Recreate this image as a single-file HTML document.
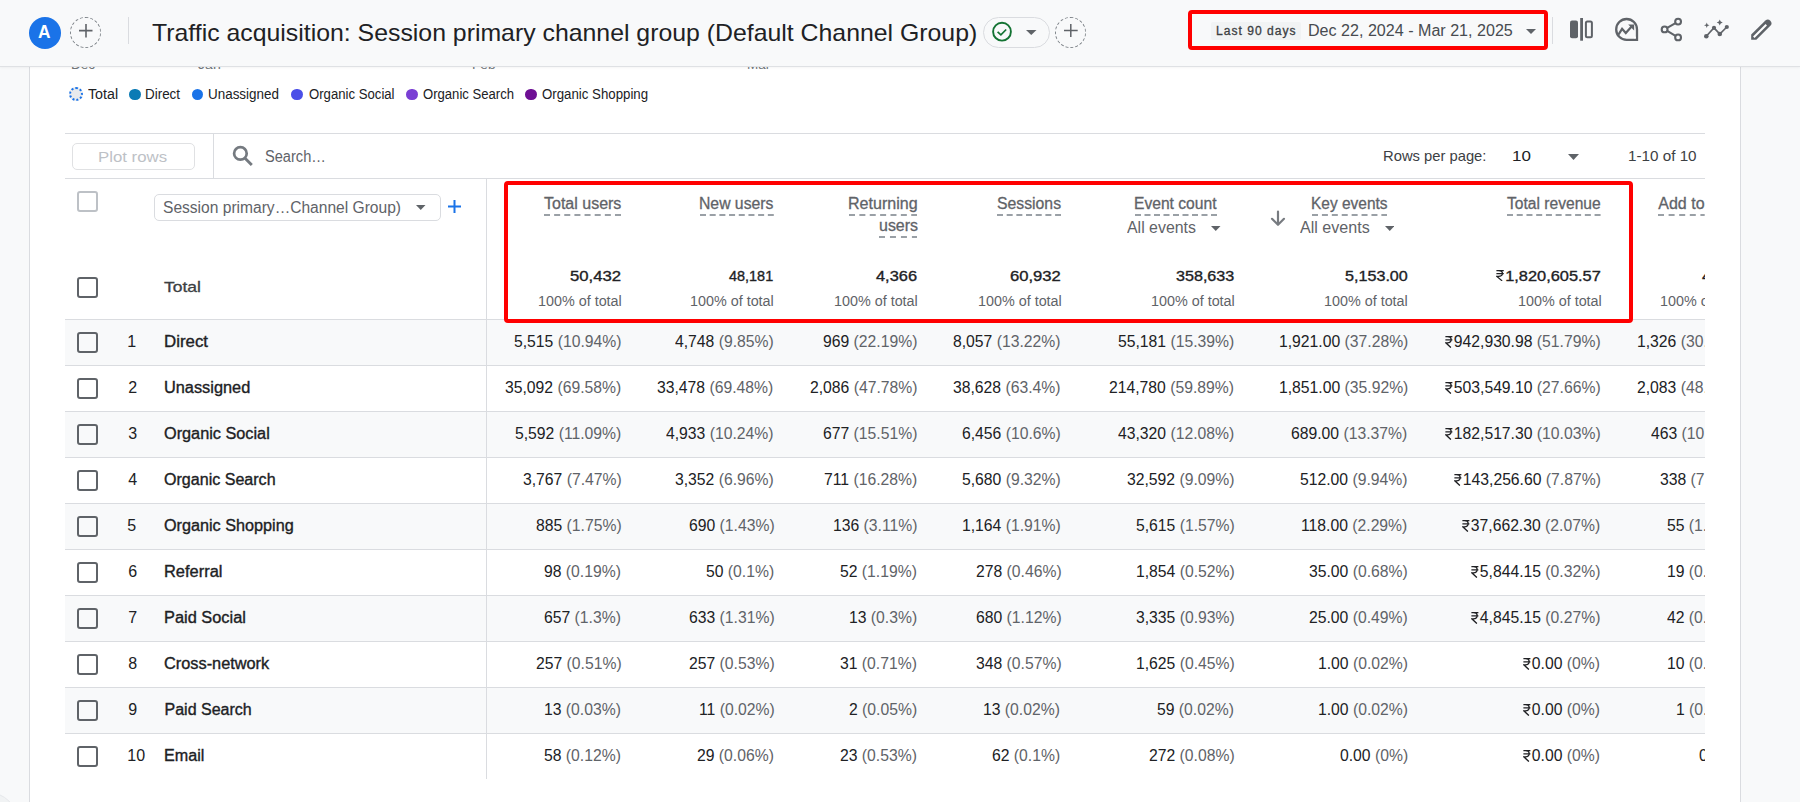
<!DOCTYPE html>
<html><head><meta charset="utf-8"><title>Traffic acquisition</title>
<style>
*{box-sizing:border-box;margin:0;padding:0}
html,body{width:1800px;height:802px;overflow:hidden;background:#f8f9fa;font-family:"Liberation Sans",sans-serif;position:relative}
.t{position:absolute;white-space:nowrap;line-height:1;font-family:"Liberation Sans",sans-serif;transform-origin:0 0}
.rp{display:inline-block;width:0.5em;height:0.75em;vertical-align:-0.04em;margin-right:0.06em}
.med{-webkit-text-stroke:0.35px currentColor}
.mh{-webkit-text-stroke:0.3px currentColor}
.tst{-webkit-text-stroke:0.35px currentColor}
.a{position:absolute;display:block}
.hl{position:absolute;left:65px;width:1640px;height:1px;background:#dadce0}
.vl{position:absolute;width:1px;background:#dadce0}
.cb{position:absolute;left:77px;width:21px;height:21px;border:2px solid #5f6368;border-radius:3px}
.rowbg{position:absolute;left:65px;width:1640px;height:45px;background:#f8f9fa}
.dash{position:absolute;height:2px;background-image:linear-gradient(to right,#9aa0a6 0,#9aa0a6 6px,transparent 6px);background-size:10px 2px;background-repeat:repeat-x}
.hdr{position:absolute;left:0;top:0;width:1800px;height:66px;background:#f8f9fa;box-shadow:0 1px 0 #dfe1e4,0 1px 3px rgba(60,64,67,.10)}
</style></head><body>
<div style="position:absolute;left:29px;top:0;width:1712px;height:802px;background:#fff;border-left:1px solid #dadce0;border-right:1px solid #dadce0"></div>
<div style="position:absolute;left:-41.7px;top:792.3px;width:59.4px;height:59.4px;border-radius:50%;background:#f1f3f4;border:1px solid #e6e8eb"></div>

<div style="position:absolute;left:69px;top:87.3px;width:14px;height:14px;border-radius:50%;border:2px dotted #1a73e8;background:#e8eaed"></div>
<div style="position:absolute;left:129px;top:88.5px;width:11.5px;height:11.5px;border-radius:50%;background:#0b7bb5"></div>
<div style="position:absolute;left:191.8px;top:88.5px;width:11.5px;height:11.5px;border-radius:50%;background:#1a73e8"></div>
<div style="position:absolute;left:291px;top:88.5px;width:11.5px;height:11.5px;border-radius:50%;background:#4b4fe8"></div>
<div style="position:absolute;left:406px;top:88.5px;width:11.5px;height:11.5px;border-radius:50%;background:#7a3fd4"></div>
<div style="position:absolute;left:525px;top:88.5px;width:11.5px;height:11.5px;border-radius:50%;background:#6e0f94"></div>
<div class="rowbg" style="top:320px"></div>
<div class="rowbg" style="top:412px"></div>
<div class="rowbg" style="top:504px"></div>
<div class="rowbg" style="top:596px"></div>
<div class="rowbg" style="top:688px"></div>
<div class="hl" style="top:133px"></div>
<div class="hl" style="top:178px"></div>
<div class="hl" style="top:319px"></div>
<div class="hl" style="top:365px"></div>
<div class="hl" style="top:411px"></div>
<div class="hl" style="top:457px"></div>
<div class="hl" style="top:503px"></div>
<div class="hl" style="top:549px"></div>
<div class="hl" style="top:595px"></div>
<div class="hl" style="top:641px"></div>
<div class="hl" style="top:687px"></div>
<div class="hl" style="top:733px"></div>
<div class="vl" style="left:213px;top:133px;height:45px"></div>
<div class="vl" style="left:486px;top:178px;height:601px"></div>
<div style="position:absolute;left:72px;top:143px;width:122.5px;height:27px;border:1px solid #e0e1e3;border-radius:5px"></div>
<svg class="a" style="left:229px;top:143px" width="26" height="26" viewBox="0 0 26 26"><circle cx="11.4" cy="10.4" r="6.3" fill="none" stroke="#757a80" stroke-width="2.7"/><path d="M15.8 15L22.8 22" stroke="#757a80" stroke-width="2.9" stroke-linecap="butt"/></svg>
<svg class="a" style="left:1567.5px;top:154px" width="11" height="6" viewBox="0 0 11 6"><path fill="#5f6368" d="M0 0H11L5.5 6z"/></svg>
<div style="position:absolute;left:154px;top:194px;width:287px;height:27px;border:1px solid #dadce0;border-radius:5px"></div>
<svg class="a" style="left:416px;top:204.5px" width="9.5" height="5" viewBox="0 0 9.5 5"><path fill="#5f6368" d="M0 0H9.5L4.75 5z"/></svg>
<svg class="a" style="left:448px;top:200px" width="13" height="13" viewBox="0 0 13 13"><path d="M6.5 0V13M0 6.5H13" stroke="#1a73e8" stroke-width="2"/></svg>
<div class="cb" style="top:191px;border-color:#bdc1c6"></div>
<div class="cb" style="top:277px;border-color:#5f6368"></div>
<div class="cb" style="top:332px;border-color:#5f6368"></div>
<div class="cb" style="top:378px;border-color:#5f6368"></div>
<div class="cb" style="top:424px;border-color:#5f6368"></div>
<div class="cb" style="top:470px;border-color:#5f6368"></div>
<div class="cb" style="top:516px;border-color:#5f6368"></div>
<div class="cb" style="top:562px;border-color:#5f6368"></div>
<div class="cb" style="top:608px;border-color:#5f6368"></div>
<div class="cb" style="top:654px;border-color:#5f6368"></div>
<div class="cb" style="top:700px;border-color:#5f6368"></div>
<div class="cb" style="top:746px;border-color:#5f6368"></div>
<svg class="a" style="left:544px;top:214px" width="77.0" height="2"><line x1="0" y1="1" x2="77.0" y2="1" stroke="#9aa0a6" stroke-width="2" stroke-dasharray="6 4.14"/></svg>
<svg class="a" style="left:700px;top:214px" width="73.8" height="2"><line x1="0" y1="1" x2="73.8" y2="1" stroke="#9aa0a6" stroke-width="2" stroke-dasharray="6 3.69"/></svg>
<svg class="a" style="left:849.3px;top:214px" width="68.2" height="2"><line x1="0" y1="1" x2="68.2" y2="1" stroke="#9aa0a6" stroke-width="2" stroke-dasharray="6 4.37"/></svg>
<svg class="a" style="left:878.6px;top:236px" width="38.9" height="2"><line x1="0" y1="1" x2="38.9" y2="1" stroke="#9aa0a6" stroke-width="2" stroke-dasharray="6 4.97"/></svg>
<svg class="a" style="left:996.7px;top:214px" width="64.1" height="2"><line x1="0" y1="1" x2="64.1" y2="1" stroke="#9aa0a6" stroke-width="2" stroke-dasharray="6 3.68"/></svg>
<svg class="a" style="left:1135px;top:214px" width="82.0" height="2"><line x1="0" y1="1" x2="82.0" y2="1" stroke="#9aa0a6" stroke-width="2" stroke-dasharray="6 3.50"/></svg>
<svg class="a" style="left:1311.6px;top:214px" width="75.4" height="2"><line x1="0" y1="1" x2="75.4" y2="1" stroke="#9aa0a6" stroke-width="2" stroke-dasharray="6 3.91"/></svg>
<svg class="a" style="left:1507px;top:214px" width="93.6" height="2"><line x1="0" y1="1" x2="93.6" y2="1" stroke="#9aa0a6" stroke-width="2" stroke-dasharray="6 3.73"/></svg>
<svg class="a" style="left:1658.3px;top:214px" width="46.7" height="2"><line x1="0" y1="1" x2="46.7" y2="1" stroke="#9aa0a6" stroke-width="2" stroke-dasharray="6 4.60"/></svg>
<svg class="a" style="left:1211px;top:226px" width="9.5" height="5" viewBox="0 0 9.5 5"><path fill="#5f6368" d="M0 0H9.5L4.75 5z"/></svg>
<svg class="a" style="left:1384.5px;top:226px" width="9.5" height="5" viewBox="0 0 9.5 5"><path fill="#5f6368" d="M0 0H9.5L4.75 5z"/></svg>
<svg class="a" style="left:1270px;top:210px" width="16" height="17" viewBox="0 0 16 17"><path d="M8 1.6V14.4M2 8.8L8 14.8L14 8.8" fill="none" stroke="#777b80" stroke-width="2.2" stroke-linecap="round" stroke-linejoin="round"/></svg>
<div style="position:absolute;left:0;top:0;width:1705px;height:802px;overflow:hidden">
<div class="t " style="left:70.57px;top:59.00px;font-size:12px;font-weight:normal;color:#70757a;transform:scaleX(1.1300)">Dec</div>
<div class="t " style="left:197.70px;top:59.00px;font-size:12px;font-weight:normal;color:#70757a;transform:scaleX(1.1737)">Jan</div>
<div class="t " style="left:471.87px;top:59.00px;font-size:12px;font-weight:normal;color:#70757a;transform:scaleX(1.1350)">Feb</div>
<div class="t " style="left:746.88px;top:59.00px;font-size:12px;font-weight:normal;color:#70757a;transform:scaleX(1.1250)">Mar</div>
<div class="t " style="left:88.00px;top:86.70px;font-size:14px;font-weight:normal;color:#202124;transform:scaleX(1.0172)">Total</div>
<div class="t " style="left:145.34px;top:86.70px;font-size:14px;font-weight:normal;color:#202124;transform:scaleX(0.9583)">Direct</div>
<div class="t " style="left:208.24px;top:86.70px;font-size:14px;font-weight:normal;color:#202124;transform:scaleX(0.9589)">Unassigned</div>
<div class="t " style="left:308.50px;top:86.70px;font-size:14px;font-weight:normal;color:#202124;transform:scaleX(0.9396)">Organic Social</div>
<div class="t " style="left:423.00px;top:86.70px;font-size:14px;font-weight:normal;color:#202124;transform:scaleX(0.9351)">Organic Search</div>
<div class="t " style="left:542.40px;top:86.70px;font-size:14px;font-weight:normal;color:#202124;transform:scaleX(0.9464)">Organic Shopping</div>
<div class="t " style="left:98.08px;top:148.70px;font-size:15px;font-weight:normal;color:#bdc1c6;transform:scaleX(1.1197)">Plot rows</div>
<div class="t " style="left:264.89px;top:148.70px;font-size:16px;font-weight:normal;color:#5f6368;transform:scaleX(0.9125)">Search…</div>
<div class="t " style="left:1383.22px;top:147.90px;font-size:15px;font-weight:normal;color:#3c4043;transform:scaleX(0.9845)">Rows per page:</div>
<div class="t " style="left:1512.47px;top:147.90px;font-size:15px;font-weight:normal;color:#202124;transform:scaleX(1.1333)">10</div>
<div class="t " style="left:1627.78px;top:147.90px;font-size:15px;font-weight:normal;color:#3c4043;transform:scaleX(1.0152)">1-10 of 10</div>
<div class="t " style="left:163.23px;top:199.60px;font-size:16px;font-weight:normal;color:#5f6368;transform:scaleX(0.9733)">Session primary…Channel Group)</div>
<div class="t mh" style="left:164.20px;top:279.20px;font-size:15px;font-weight:normal;color:#3c4043;transform:scaleX(1.1645)">Total</div>
<div class="t mh" style="left:544.00px;top:195.60px;font-size:16px;font-weight:normal;color:#5f6368">Total users</div>
<div class="t mh" style="left:699.02px;top:195.60px;font-size:16px;font-weight:normal;color:#5f6368;transform:scaleX(0.9840)">New users</div>
<div class="t mh" style="left:848.30px;top:195.60px;font-size:16px;font-weight:normal;color:#5f6368;transform:scaleX(1.0029)">Returning</div>
<div class="t mh" style="left:996.70px;top:195.60px;font-size:16px;font-weight:normal;color:#5f6368;transform:scaleX(0.9862)">Sessions</div>
<div class="t mh" style="left:1134.02px;top:195.60px;font-size:16px;font-weight:normal;color:#5f6368;transform:scaleX(0.9762)">Event count</div>
<div class="t mh" style="left:1310.63px;top:195.60px;font-size:16px;font-weight:normal;color:#5f6368;transform:scaleX(0.9667)">Key events</div>
<div class="t mh" style="left:1507.00px;top:195.60px;font-size:16px;font-weight:normal;color:#5f6368;transform:scaleX(0.9750)">Total revenue</div>
<div class="t mh" style="left:878.60px;top:217.80px;font-size:16px;font-weight:normal;color:#5f6368;transform:scaleX(0.9974)">users</div>
<div class="t mh" style="left:1658.30px;top:195.60px;font-size:16px;font-weight:normal;color:#5f6368">Add to carts</div>
<div class="t " style="left:1127.00px;top:220.00px;font-size:16px;font-weight:normal;color:#5f6368;transform:scaleX(0.9942)">All events</div>
<div class="t " style="left:1300.00px;top:220.00px;font-size:16px;font-weight:normal;color:#5f6368;transform:scaleX(1.0058)">All events</div>
<div class="t tst" style="left:569.80px;top:267.70px;font-size:15px;font-weight:normal;color:#202124;transform:scaleX(1.1130)">50,432</div>
<div class="t " style="left:537.98px;top:293.90px;font-size:14px;font-weight:normal;color:#5f6368;transform:scaleX(1.0250)">100% of total</div>
<div class="t tst" style="left:729.20px;top:267.70px;font-size:15px;font-weight:normal;color:#202124;transform:scaleX(0.9630)">48,181</div>
<div class="t " style="left:690.48px;top:293.90px;font-size:14px;font-weight:normal;color:#5f6368;transform:scaleX(1.0250)">100% of total</div>
<div class="t tst" style="left:876.00px;top:267.70px;font-size:15px;font-weight:normal;color:#202124;transform:scaleX(1.0921)">4,366</div>
<div class="t " style="left:834.48px;top:293.90px;font-size:14px;font-weight:normal;color:#5f6368;transform:scaleX(1.0250)">100% of total</div>
<div class="t tst" style="left:1009.80px;top:267.70px;font-size:15px;font-weight:normal;color:#202124;transform:scaleX(1.1087)">60,932</div>
<div class="t " style="left:977.77px;top:293.90px;font-size:14px;font-weight:normal;color:#5f6368;transform:scaleX(1.0250)">100% of total</div>
<div class="t tst" style="left:1176.00px;top:267.70px;font-size:15px;font-weight:normal;color:#202124;transform:scaleX(1.0741)">358,633</div>
<div class="t " style="left:1150.97px;top:293.90px;font-size:14px;font-weight:normal;color:#5f6368;transform:scaleX(1.0250)">100% of total</div>
<div class="t tst" style="left:1345.00px;top:267.70px;font-size:15px;font-weight:normal;color:#202124;transform:scaleX(1.0759)">5,153.00</div>
<div class="t " style="left:1324.38px;top:293.90px;font-size:14px;font-weight:normal;color:#5f6368;transform:scaleX(1.0250)">100% of total</div>
<div class="t tst" style="left:1495.80px;top:267.70px;font-size:15px;font-weight:normal;color:#202124;transform:scaleX(1.0917)"><svg class="rp" viewBox="0 0 8 12"><path d="M0.4 0.7H7.6M0.4 3.8H7.6M2.4 0.7C5.3 0.7 6.3 2.1 6.3 3.8C6.3 5.6 5 6.8 2.4 6.8H0.8L6 11.6" fill="none" stroke="currentColor" stroke-width="1.3"/></svg>1,820,605.57</div>
<div class="t " style="left:1517.57px;top:293.90px;font-size:14px;font-weight:normal;color:#5f6368;transform:scaleX(1.0250)">100% of total</div>
<div class="t tst" style="left:1701.70px;top:267.70px;font-size:15px;font-weight:normal;color:#202124;transform:scaleX(1.1130)">4,337</div>
<div class="t " style="left:1659.97px;top:293.90px;font-size:14px;font-weight:normal;color:#5f6368;transform:scaleX(1.0250)">100% of total</div>
<div class="t " style="left:127.30px;top:334.00px;font-size:16px;font-weight:normal;color:#202124">1</div>
<div class="t med" style="left:164.45px;top:334.00px;font-size:16px;font-weight:normal;color:#202124;transform:scaleX(1.0537)">Direct</div>
<div class="t " style="left:513.72px;top:334.00px;font-size:16px;font-weight:normal;color:#202124;transform:scaleX(0.9824)">5,515 <span style="color:#5f6368">(10.94%)</span></div>
<div class="t " style="left:675.06px;top:334.00px;font-size:16px;font-weight:normal;color:#202124;transform:scaleX(0.9824)">4,748 <span style="color:#5f6368">(9.85%)</span></div>
<div class="t " style="left:823.42px;top:334.00px;font-size:16px;font-weight:normal;color:#202124;transform:scaleX(0.9824)">969 <span style="color:#5f6368">(22.19%)</span></div>
<div class="t " style="left:952.92px;top:334.00px;font-size:16px;font-weight:normal;color:#202124;transform:scaleX(0.9824)">8,057 <span style="color:#5f6368">(13.22%)</span></div>
<div class="t " style="left:1117.83px;top:334.00px;font-size:16px;font-weight:normal;color:#202124;transform:scaleX(0.9824)">55,181 <span style="color:#5f6368">(15.39%)</span></div>
<div class="t " style="left:1278.70px;top:334.00px;font-size:16px;font-weight:normal;color:#202124;transform:scaleX(0.9824)">1,921.00 <span style="color:#5f6368">(37.28%)</span></div>
<div class="t " style="left:1444.78px;top:334.00px;font-size:16px;font-weight:normal;color:#202124;transform:scaleX(0.9824)"><svg class="rp" viewBox="0 0 8 12"><path d="M0.4 0.7H7.6M0.4 3.8H7.6M2.4 0.7C5.3 0.7 6.3 2.1 6.3 3.8C6.3 5.6 5 6.8 2.4 6.8H0.8L6 11.6" fill="none" stroke="currentColor" stroke-width="1.3"/></svg>942,930.98 <span style="color:#5f6368">(51.79%)</span></div>
<div class="t " style="left:1636.92px;top:334.00px;font-size:16px;font-weight:normal;color:#202124;transform:scaleX(0.9824)">1,326 <span style="color:#5f6368">(30.57%)</span></div>
<div class="t " style="left:128.30px;top:380.00px;font-size:16px;font-weight:normal;color:#202124">2</div>
<div class="t med" style="left:164.48px;top:380.00px;font-size:16px;font-weight:normal;color:#202124;transform:scaleX(1.0205)">Unassigned</div>
<div class="t " style="left:504.88px;top:380.00px;font-size:16px;font-weight:normal;color:#202124;transform:scaleX(0.9824)">35,092 <span style="color:#5f6368">(69.58%)</span></div>
<div class="t " style="left:657.38px;top:380.00px;font-size:16px;font-weight:normal;color:#202124;transform:scaleX(0.9824)">33,478 <span style="color:#5f6368">(69.48%)</span></div>
<div class="t " style="left:809.67px;top:380.00px;font-size:16px;font-weight:normal;color:#202124;transform:scaleX(0.9824)">2,086 <span style="color:#5f6368">(47.78%)</span></div>
<div class="t " style="left:952.92px;top:380.00px;font-size:16px;font-weight:normal;color:#202124;transform:scaleX(0.9824)">38,628 <span style="color:#5f6368">(63.4%)</span></div>
<div class="t " style="left:1108.98px;top:380.00px;font-size:16px;font-weight:normal;color:#202124;transform:scaleX(0.9824)">214,780 <span style="color:#5f6368">(59.89%)</span></div>
<div class="t " style="left:1278.70px;top:380.00px;font-size:16px;font-weight:normal;color:#202124;transform:scaleX(0.9824)">1,851.00 <span style="color:#5f6368">(35.92%)</span></div>
<div class="t " style="left:1444.78px;top:380.00px;font-size:16px;font-weight:normal;color:#202124;transform:scaleX(0.9824)"><svg class="rp" viewBox="0 0 8 12"><path d="M0.4 0.7H7.6M0.4 3.8H7.6M2.4 0.7C5.3 0.7 6.3 2.1 6.3 3.8C6.3 5.6 5 6.8 2.4 6.8H0.8L6 11.6" fill="none" stroke="currentColor" stroke-width="1.3"/></svg>503,549.10 <span style="color:#5f6368">(27.66%)</span></div>
<div class="t " style="left:1636.92px;top:380.00px;font-size:16px;font-weight:normal;color:#202124;transform:scaleX(0.9824)">2,083 <span style="color:#5f6368">(48.03%)</span></div>
<div class="t " style="left:128.30px;top:426.00px;font-size:16px;font-weight:normal;color:#202124">3</div>
<div class="t med" style="left:163.60px;top:426.00px;font-size:16px;font-weight:normal;color:#202124;transform:scaleX(1.0163)">Organic Social</div>
<div class="t " style="left:514.70px;top:426.00px;font-size:16px;font-weight:normal;color:#202124;transform:scaleX(0.9824)">5,592 <span style="color:#5f6368">(11.09%)</span></div>
<div class="t " style="left:666.22px;top:426.00px;font-size:16px;font-weight:normal;color:#202124;transform:scaleX(0.9824)">4,933 <span style="color:#5f6368">(10.24%)</span></div>
<div class="t " style="left:823.42px;top:426.00px;font-size:16px;font-weight:normal;color:#202124;transform:scaleX(0.9824)">677 <span style="color:#5f6368">(15.51%)</span></div>
<div class="t " style="left:961.76px;top:426.00px;font-size:16px;font-weight:normal;color:#202124;transform:scaleX(0.9824)">6,456 <span style="color:#5f6368">(10.6%)</span></div>
<div class="t " style="left:1117.83px;top:426.00px;font-size:16px;font-weight:normal;color:#202124;transform:scaleX(0.9824)">43,320 <span style="color:#5f6368">(12.08%)</span></div>
<div class="t " style="left:1291.48px;top:426.00px;font-size:16px;font-weight:normal;color:#202124;transform:scaleX(0.9824)">689.00 <span style="color:#5f6368">(13.37%)</span></div>
<div class="t " style="left:1444.78px;top:426.00px;font-size:16px;font-weight:normal;color:#202124;transform:scaleX(0.9824)"><svg class="rp" viewBox="0 0 8 12"><path d="M0.4 0.7H7.6M0.4 3.8H7.6M2.4 0.7C5.3 0.7 6.3 2.1 6.3 3.8C6.3 5.6 5 6.8 2.4 6.8H0.8L6 11.6" fill="none" stroke="currentColor" stroke-width="1.3"/></svg>182,517.30 <span style="color:#5f6368">(10.03%)</span></div>
<div class="t " style="left:1650.67px;top:426.00px;font-size:16px;font-weight:normal;color:#202124;transform:scaleX(0.9824)">463 <span style="color:#5f6368">(10.68%)</span></div>
<div class="t " style="left:128.30px;top:472.00px;font-size:16px;font-weight:normal;color:#202124">4</div>
<div class="t med" style="left:163.60px;top:472.00px;font-size:16px;font-weight:normal;color:#202124;transform:scaleX(1.0036)">Organic Search</div>
<div class="t " style="left:522.56px;top:472.00px;font-size:16px;font-weight:normal;color:#202124;transform:scaleX(0.9824)">3,767 <span style="color:#5f6368">(7.47%)</span></div>
<div class="t " style="left:675.06px;top:472.00px;font-size:16px;font-weight:normal;color:#202124;transform:scaleX(0.9824)">3,352 <span style="color:#5f6368">(6.96%)</span></div>
<div class="t " style="left:824.40px;top:472.00px;font-size:16px;font-weight:normal;color:#202124;transform:scaleX(0.9824)">711 <span style="color:#5f6368">(16.28%)</span></div>
<div class="t " style="left:961.76px;top:472.00px;font-size:16px;font-weight:normal;color:#202124;transform:scaleX(0.9824)">5,680 <span style="color:#5f6368">(9.32%)</span></div>
<div class="t " style="left:1126.67px;top:472.00px;font-size:16px;font-weight:normal;color:#202124;transform:scaleX(0.9824)">32,592 <span style="color:#5f6368">(9.09%)</span></div>
<div class="t " style="left:1300.32px;top:472.00px;font-size:16px;font-weight:normal;color:#202124;transform:scaleX(0.9824)">512.00 <span style="color:#5f6368">(9.94%)</span></div>
<div class="t " style="left:1453.62px;top:472.00px;font-size:16px;font-weight:normal;color:#202124;transform:scaleX(0.9824)"><svg class="rp" viewBox="0 0 8 12"><path d="M0.4 0.7H7.6M0.4 3.8H7.6M2.4 0.7C5.3 0.7 6.3 2.1 6.3 3.8C6.3 5.6 5 6.8 2.4 6.8H0.8L6 11.6" fill="none" stroke="currentColor" stroke-width="1.3"/></svg>143,256.60 <span style="color:#5f6368">(7.87%)</span></div>
<div class="t " style="left:1659.51px;top:472.00px;font-size:16px;font-weight:normal;color:#202124;transform:scaleX(0.9824)">338 <span style="color:#5f6368">(7.79%)</span></div>
<div class="t " style="left:127.30px;top:518.00px;font-size:16px;font-weight:normal;color:#202124">5</div>
<div class="t med" style="left:163.60px;top:518.00px;font-size:16px;font-weight:normal;color:#202124;transform:scaleX(1.0125)">Organic Shopping</div>
<div class="t " style="left:536.31px;top:518.00px;font-size:16px;font-weight:normal;color:#202124;transform:scaleX(0.9824)">885 <span style="color:#5f6368">(1.75%)</span></div>
<div class="t " style="left:688.81px;top:518.00px;font-size:16px;font-weight:normal;color:#202124;transform:scaleX(0.9824)">690 <span style="color:#5f6368">(1.43%)</span></div>
<div class="t " style="left:833.25px;top:518.00px;font-size:16px;font-weight:normal;color:#202124;transform:scaleX(0.9824)">136 <span style="color:#5f6368">(3.11%)</span></div>
<div class="t " style="left:961.76px;top:518.00px;font-size:16px;font-weight:normal;color:#202124;transform:scaleX(0.9824)">1,164 <span style="color:#5f6368">(1.91%)</span></div>
<div class="t " style="left:1135.51px;top:518.00px;font-size:16px;font-weight:normal;color:#202124;transform:scaleX(0.9824)">5,615 <span style="color:#5f6368">(1.57%)</span></div>
<div class="t " style="left:1301.30px;top:518.00px;font-size:16px;font-weight:normal;color:#202124;transform:scaleX(0.9824)">118.00 <span style="color:#5f6368">(2.29%)</span></div>
<div class="t " style="left:1462.46px;top:518.00px;font-size:16px;font-weight:normal;color:#202124;transform:scaleX(0.9824)"><svg class="rp" viewBox="0 0 8 12"><path d="M0.4 0.7H7.6M0.4 3.8H7.6M2.4 0.7C5.3 0.7 6.3 2.1 6.3 3.8C6.3 5.6 5 6.8 2.4 6.8H0.8L6 11.6" fill="none" stroke="currentColor" stroke-width="1.3"/></svg>37,662.30 <span style="color:#5f6368">(2.07%)</span></div>
<div class="t " style="left:1667.37px;top:518.00px;font-size:16px;font-weight:normal;color:#202124;transform:scaleX(0.9824)">55 <span style="color:#5f6368">(1.27%)</span></div>
<div class="t " style="left:128.30px;top:564.00px;font-size:16px;font-weight:normal;color:#202124">6</div>
<div class="t med" style="left:164.47px;top:564.00px;font-size:16px;font-weight:normal;color:#202124;transform:scaleX(1.0273)">Referral</div>
<div class="t " style="left:544.17px;top:564.00px;font-size:16px;font-weight:normal;color:#202124;transform:scaleX(0.9824)">98 <span style="color:#5f6368">(0.19%)</span></div>
<div class="t " style="left:705.51px;top:564.00px;font-size:16px;font-weight:normal;color:#202124;transform:scaleX(0.9824)">50 <span style="color:#5f6368">(0.1%)</span></div>
<div class="t " style="left:840.12px;top:564.00px;font-size:16px;font-weight:normal;color:#202124;transform:scaleX(0.9824)">52 <span style="color:#5f6368">(1.19%)</span></div>
<div class="t " style="left:975.51px;top:564.00px;font-size:16px;font-weight:normal;color:#202124;transform:scaleX(0.9824)">278 <span style="color:#5f6368">(0.46%)</span></div>
<div class="t " style="left:1135.51px;top:564.00px;font-size:16px;font-weight:normal;color:#202124;transform:scaleX(0.9824)">1,854 <span style="color:#5f6368">(0.52%)</span></div>
<div class="t " style="left:1309.16px;top:564.00px;font-size:16px;font-weight:normal;color:#202124;transform:scaleX(0.9824)">35.00 <span style="color:#5f6368">(0.68%)</span></div>
<div class="t " style="left:1471.30px;top:564.00px;font-size:16px;font-weight:normal;color:#202124;transform:scaleX(0.9824)"><svg class="rp" viewBox="0 0 8 12"><path d="M0.4 0.7H7.6M0.4 3.8H7.6M2.4 0.7C5.3 0.7 6.3 2.1 6.3 3.8C6.3 5.6 5 6.8 2.4 6.8H0.8L6 11.6" fill="none" stroke="currentColor" stroke-width="1.3"/></svg>5,844.15 <span style="color:#5f6368">(0.32%)</span></div>
<div class="t " style="left:1667.37px;top:564.00px;font-size:16px;font-weight:normal;color:#202124;transform:scaleX(0.9824)">19 <span style="color:#5f6368">(0.44%)</span></div>
<div class="t " style="left:128.30px;top:610.00px;font-size:16px;font-weight:normal;color:#202124">7</div>
<div class="t med" style="left:164.48px;top:610.00px;font-size:16px;font-weight:normal;color:#202124;transform:scaleX(1.0228)">Paid Social</div>
<div class="t " style="left:544.17px;top:610.00px;font-size:16px;font-weight:normal;color:#202124;transform:scaleX(0.9824)">657 <span style="color:#5f6368">(1.3%)</span></div>
<div class="t " style="left:688.81px;top:610.00px;font-size:16px;font-weight:normal;color:#202124;transform:scaleX(0.9824)">633 <span style="color:#5f6368">(1.31%)</span></div>
<div class="t " style="left:848.96px;top:610.00px;font-size:16px;font-weight:normal;color:#202124;transform:scaleX(0.9824)">13 <span style="color:#5f6368">(0.3%)</span></div>
<div class="t " style="left:975.51px;top:610.00px;font-size:16px;font-weight:normal;color:#202124;transform:scaleX(0.9824)">680 <span style="color:#5f6368">(1.12%)</span></div>
<div class="t " style="left:1135.51px;top:610.00px;font-size:16px;font-weight:normal;color:#202124;transform:scaleX(0.9824)">3,335 <span style="color:#5f6368">(0.93%)</span></div>
<div class="t " style="left:1309.16px;top:610.00px;font-size:16px;font-weight:normal;color:#202124;transform:scaleX(0.9824)">25.00 <span style="color:#5f6368">(0.49%)</span></div>
<div class="t " style="left:1471.30px;top:610.00px;font-size:16px;font-weight:normal;color:#202124;transform:scaleX(0.9824)"><svg class="rp" viewBox="0 0 8 12"><path d="M0.4 0.7H7.6M0.4 3.8H7.6M2.4 0.7C5.3 0.7 6.3 2.1 6.3 3.8C6.3 5.6 5 6.8 2.4 6.8H0.8L6 11.6" fill="none" stroke="currentColor" stroke-width="1.3"/></svg>4,845.15 <span style="color:#5f6368">(0.27%)</span></div>
<div class="t " style="left:1667.37px;top:610.00px;font-size:16px;font-weight:normal;color:#202124;transform:scaleX(0.9824)">42 <span style="color:#5f6368">(0.97%)</span></div>
<div class="t " style="left:128.30px;top:656.00px;font-size:16px;font-weight:normal;color:#202124">8</div>
<div class="t med" style="left:163.60px;top:656.00px;font-size:16px;font-weight:normal;color:#202124;transform:scaleX(1.0202)">Cross-network</div>
<div class="t " style="left:536.31px;top:656.00px;font-size:16px;font-weight:normal;color:#202124;transform:scaleX(0.9824)">257 <span style="color:#5f6368">(0.51%)</span></div>
<div class="t " style="left:688.81px;top:656.00px;font-size:16px;font-weight:normal;color:#202124;transform:scaleX(0.9824)">257 <span style="color:#5f6368">(0.53%)</span></div>
<div class="t " style="left:840.12px;top:656.00px;font-size:16px;font-weight:normal;color:#202124;transform:scaleX(0.9824)">31 <span style="color:#5f6368">(0.71%)</span></div>
<div class="t " style="left:975.51px;top:656.00px;font-size:16px;font-weight:normal;color:#202124;transform:scaleX(0.9824)">348 <span style="color:#5f6368">(0.57%)</span></div>
<div class="t " style="left:1135.51px;top:656.00px;font-size:16px;font-weight:normal;color:#202124;transform:scaleX(0.9824)">1,625 <span style="color:#5f6368">(0.45%)</span></div>
<div class="t " style="left:1318.00px;top:656.00px;font-size:16px;font-weight:normal;color:#202124;transform:scaleX(0.9824)">1.00 <span style="color:#5f6368">(0.02%)</span></div>
<div class="t " style="left:1523.37px;top:656.00px;font-size:16px;font-weight:normal;color:#202124;transform:scaleX(0.9824)"><svg class="rp" viewBox="0 0 8 12"><path d="M0.4 0.7H7.6M0.4 3.8H7.6M2.4 0.7C5.3 0.7 6.3 2.1 6.3 3.8C6.3 5.6 5 6.8 2.4 6.8H0.8L6 11.6" fill="none" stroke="currentColor" stroke-width="1.3"/></svg>0.00 <span style="color:#5f6368">(0%)</span></div>
<div class="t " style="left:1667.37px;top:656.00px;font-size:16px;font-weight:normal;color:#202124;transform:scaleX(0.9824)">10 <span style="color:#5f6368">(0.23%)</span></div>
<div class="t " style="left:128.30px;top:702.00px;font-size:16px;font-weight:normal;color:#202124">9</div>
<div class="t med" style="left:164.50px;top:702.00px;font-size:16px;font-weight:normal;color:#202124">Paid Search</div>
<div class="t " style="left:544.17px;top:702.00px;font-size:16px;font-weight:normal;color:#202124;transform:scaleX(0.9824)">13 <span style="color:#5f6368">(0.03%)</span></div>
<div class="t " style="left:698.64px;top:702.00px;font-size:16px;font-weight:normal;color:#202124;transform:scaleX(0.9824)">11 <span style="color:#5f6368">(0.02%)</span></div>
<div class="t " style="left:848.96px;top:702.00px;font-size:16px;font-weight:normal;color:#202124;transform:scaleX(0.9824)">2 <span style="color:#5f6368">(0.05%)</span></div>
<div class="t " style="left:983.37px;top:702.00px;font-size:16px;font-weight:normal;color:#202124;transform:scaleX(0.9824)">13 <span style="color:#5f6368">(0.02%)</span></div>
<div class="t " style="left:1157.12px;top:702.00px;font-size:16px;font-weight:normal;color:#202124;transform:scaleX(0.9824)">59 <span style="color:#5f6368">(0.02%)</span></div>
<div class="t " style="left:1318.00px;top:702.00px;font-size:16px;font-weight:normal;color:#202124;transform:scaleX(0.9824)">1.00 <span style="color:#5f6368">(0.02%)</span></div>
<div class="t " style="left:1523.37px;top:702.00px;font-size:16px;font-weight:normal;color:#202124;transform:scaleX(0.9824)"><svg class="rp" viewBox="0 0 8 12"><path d="M0.4 0.7H7.6M0.4 3.8H7.6M2.4 0.7C5.3 0.7 6.3 2.1 6.3 3.8C6.3 5.6 5 6.8 2.4 6.8H0.8L6 11.6" fill="none" stroke="currentColor" stroke-width="1.3"/></svg>0.00 <span style="color:#5f6368">(0%)</span></div>
<div class="t " style="left:1676.21px;top:702.00px;font-size:16px;font-weight:normal;color:#202124;transform:scaleX(0.9824)">1 <span style="color:#5f6368">(0.02%)</span></div>
<div class="t " style="left:127.30px;top:748.00px;font-size:16px;font-weight:normal;color:#202124">10</div>
<div class="t med" style="left:164.49px;top:748.00px;font-size:16px;font-weight:normal;color:#202124;transform:scaleX(1.0077)">Email</div>
<div class="t " style="left:544.17px;top:748.00px;font-size:16px;font-weight:normal;color:#202124;transform:scaleX(0.9824)">58 <span style="color:#5f6368">(0.12%)</span></div>
<div class="t " style="left:696.67px;top:748.00px;font-size:16px;font-weight:normal;color:#202124;transform:scaleX(0.9824)">29 <span style="color:#5f6368">(0.06%)</span></div>
<div class="t " style="left:840.12px;top:748.00px;font-size:16px;font-weight:normal;color:#202124;transform:scaleX(0.9824)">23 <span style="color:#5f6368">(0.53%)</span></div>
<div class="t " style="left:992.21px;top:748.00px;font-size:16px;font-weight:normal;color:#202124;transform:scaleX(0.9824)">62 <span style="color:#5f6368">(0.1%)</span></div>
<div class="t " style="left:1149.26px;top:748.00px;font-size:16px;font-weight:normal;color:#202124;transform:scaleX(0.9824)">272 <span style="color:#5f6368">(0.08%)</span></div>
<div class="t " style="left:1339.61px;top:748.00px;font-size:16px;font-weight:normal;color:#202124;transform:scaleX(0.9824)">0.00 <span style="color:#5f6368">(0%)</span></div>
<div class="t " style="left:1523.37px;top:748.00px;font-size:16px;font-weight:normal;color:#202124;transform:scaleX(0.9824)"><svg class="rp" viewBox="0 0 8 12"><path d="M0.4 0.7H7.6M0.4 3.8H7.6M2.4 0.7C5.3 0.7 6.3 2.1 6.3 3.8C6.3 5.6 5 6.8 2.4 6.8H0.8L6 11.6" fill="none" stroke="currentColor" stroke-width="1.3"/></svg>0.00 <span style="color:#5f6368">(0%)</span></div>
<div class="t " style="left:1698.81px;top:748.00px;font-size:16px;font-weight:normal;color:#202124;transform:scaleX(0.9824)">0 <span style="color:#5f6368">(0%)</span></div>
</div>
<div style="position:absolute;left:504px;top:181px;width:1129px;height:142px;border:4px solid #ff0000;border-radius:4px"></div>
<div class="hdr"></div>
<div style="position:absolute;left:29px;top:16.5px;width:32px;height:32px;border-radius:50%;background:#1a73e8"></div>
<div style="position:absolute;left:70px;top:17px;width:31px;height:31px;border-radius:50%;border:1px dashed #80868b"></div>
<svg class="a" style="left:78.5px;top:24px" width="14" height="14" viewBox="0 0 14 14"><path d="M7 0V13.5M0 6.6H13.5" stroke="#5f6368" stroke-width="1.6"/></svg>
<div style="position:absolute;left:128px;top:17px;width:1px;height:27px;background:#dadce0"></div>
<div style="position:absolute;left:983px;top:17px;width:67px;height:31px;border-radius:15.5px;border:1px solid #dadce0"></div>
<svg class="a" style="left:991px;top:21px" width="22" height="22" viewBox="0 0 22 22"><circle cx="11" cy="10.7" r="8.9" fill="none" stroke="#137333" stroke-width="1.9"/><path d="M6.6 10.8L9.9 13.9L15.2 8.5" fill="none" stroke="#137333" stroke-width="1.7"/></svg>
<svg class="a" style="left:1026px;top:29.5px" width="10.5" height="5" viewBox="0 0 10.5 5"><path fill="#5f6368" d="M0 0H10.5L5.25 5z"/></svg>
<div style="position:absolute;left:1055px;top:16.5px;width:31px;height:31px;border-radius:50%;border:1px dashed #80868b"></div>
<svg class="a" style="left:1064px;top:24px" width="14" height="14" viewBox="0 0 14 14"><path d="M6.8 0V13M0 6.5H13.7" stroke="#5f6368" stroke-width="1.5"/></svg>
<div style="position:absolute;left:1188px;top:10px;width:360px;height:40px;border:4px solid #ff0000;border-radius:4px"></div>
<div style="position:absolute;left:1211px;top:22px;width:90px;height:18px;background:#f1f3f4;border-radius:2px"></div>
<svg class="a" style="left:1526px;top:29px" width="10" height="5" viewBox="0 0 10 5"><path fill="#5f6368" d="M0 0H10L5.0 5z"/></svg>
<div style="position:absolute;left:1552px;top:17px;width:1px;height:27px;background:#dadce0"></div>
<svg class="a" style="left:1560px;top:10px" width="240" height="40" viewBox="1560 10 240 40">
<g fill="#5f6368" stroke="none">
<rect x="1570" y="20.5" width="8" height="17.7" rx="2"/>
<rect x="1580.2" y="18" width="2.8" height="22.7"/>
</g>
<rect x="1585.9" y="21.5" width="6" height="15.7" rx="1.5" fill="none" stroke="#5f6368" stroke-width="2"/>
<path d="M1637 29.4A10.4 10.4 0 1 0 1626.6 39.8H1637Z" fill="none" stroke="#5f6368" stroke-width="2.3" stroke-linejoin="miter"/>
<path d="M1618.6 34.4L1622.1 28.8L1625.8 33L1631.6 26.6" fill="none" stroke="#5f6368" stroke-width="2.2"/>
<path d="M1628.2 24.6H1634.1V30.5Z" fill="#5f6368"/>
<circle cx="1635" cy="37.6" r="1" fill="#fff"/>
<g fill="none" stroke="#5f6368" stroke-width="2.1">
<circle cx="1678.1" cy="21.6" r="2.9"/><circle cx="1664.6" cy="29.4" r="2.9"/><circle cx="1678.1" cy="37.4" r="2.9"/>
<path d="M1667.2 27.9L1675.5 23.1M1667.2 30.9L1675.5 35.9"/>
</g>
<g fill="#5f6368">
<circle cx="1706.3" cy="36.2" r="2.3"/><circle cx="1714" cy="27.8" r="2.1"/><circle cx="1719.8" cy="34" r="2.3"/><circle cx="1726.8" cy="27" r="2.1"/>
<path d="M1706.75 22.5L1707.5 24.5L1709.5 25.25L1707.5 26L1706.75 28L1706 26L1704 25.25L1706 24.5Z"/>
<path d="M1719.75 19.5L1720.7 21.55L1722.75 22.5L1720.7 23.45L1719.75 25.5L1718.8 23.45L1716.75 22.5L1718.8 21.55Z"/>
</g>
<path d="M1706.3 36.2L1714 27.8L1719.8 34L1726.8 27" fill="none" stroke="#5f6368" stroke-width="1.7"/>
<path d="M1751.2 39.8V34.6L1765.4 20.4A3.7 3.7 0 0 1 1770.6 25.6L1756.4 39.8Z" fill="#5f6368"/>
<path d="M1753.8 37.2L1766.3 24.7" stroke="#fff" stroke-width="2" />
</svg>
<div class="t " style="left:38.40px;top:22.90px;font-size:18px;font-weight:bold;color:#fff;transform:scaleX(0.9615)">A</div>
<div class="t " style="left:152.20px;top:20.90px;font-size:24px;font-weight:normal;color:#202124;transform:scaleX(1.0345)">Traffic acquisition: Session primary channel group (Default Channel Group)</div>
<div class="t mh" style="left:1216.10px;top:24.80px;font-size:12px;font-weight:normal;color:#3c4043;letter-spacing:1.0px;transform:scaleX(1.0063)">Last 90 days</div>
<div class="t " style="left:1307.89px;top:22.60px;font-size:16px;font-weight:normal;color:#474b50;transform:scaleX(1.0054)">Dec 22, 2024 - Mar 21, 2025</div>
</body></html>
